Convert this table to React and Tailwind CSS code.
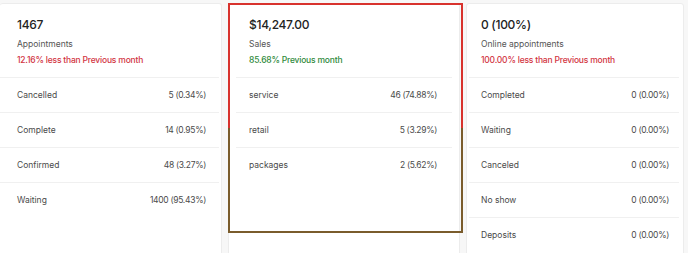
import React from "react";

const cards = [
    {
        title: "1467",
        label: "Appointments",
        note: "12.16% less than Previous month",
        noteClass: "text-[#d2343f]",
        width: "w-[222px] border-l-0",
        pad: "pl-[17px] pr-[15px]",
        rowPad: "ml-0 mr-[2px] pl-[17px] pr-[13px]",
        rows: [
            ["Cancelled", "5 (0.34%)"],
            ["Complete", "14 (0.95%)"],
            ["Confirmed", "48 (3.27%)"],
            ["Waiting", "1400 (95.43%)"],
        ],
    },
    {
        title: "$14,247.00",
        label: "Sales",
        note: "85.68% Previous month",
        noteClass: "text-[#2f8a3c]",
        width: "w-[232px]",
        pad: "pl-[20px] pr-[22px]",
        rowPad: "mx-[7px] pl-[13px] pr-[15px]",
        rows: [
            ["service", "46 (74.88%)"],
            ["retail", "5 (3.29%)"],
            ["packages", "2 (5.62%)"],
        ],
    },
    {
        title: "0 (100%)",
        label: "Online appointments",
        note: "100.00% less than Previous month",
        noteClass: "text-[#d2343f]",
        width: "w-[218px]",
        pad: "pl-[14px] pr-[14px]",
        rowPad: "ml-[2px] mr-[4px] pl-[12px] pr-[10px]",
        rows: [
            ["Completed", "0 (0.00%)"],
            ["Waiting", "0 (0.00%)"],
            ["Canceled", "0 (0.00%)"],
            ["No show", "0 (0.00%)"],
            ["Deposits", "0 (0.00%)"],
        ],
    },
];

function Card({ card }) {
    return (
        <div className={`${card.width} h-[280px] shrink-0 bg-white border border-[#ececec] rounded-[3px]`}>
            <div className={`${card.pad} pt-[13px] pb-[10px]`}>
                <div className="text-[12px] leading-[16px] font-medium tracking-[-0.3px] text-[#222]">{card.title}</div>
                <div className="mt-[4px] text-[8.5px] leading-[14px] text-[#555]">{card.label}</div>
                <div className={`mt-[2px] text-[8.5px] leading-[14px] font-medium tracking-[-0.2px] ${card.noteClass}`}>
                    {card.note}
                </div>
            </div>
            {card.rows.map(([name, value]) => (
                <div
                    key={name}
                    className={`${card.rowPad} h-[35px] flex items-center justify-between border-t border-[#f0f0f0] text-[8.5px] text-[#4a4a4a]`}
                >
                    <span>{name}</span>
                    <span className="tracking-[-0.3px]">{value}</span>
                </div>
            ))}
        </div>
    );
}

export default function App() {
    return (
        <div
            className="relative w-[688px] h-[253px] overflow-hidden bg-[#f7f7f7] flex gap-[6px] pt-[3px]"
            style={{ fontFamily: "Inter, 'Noto Sans', sans-serif" }}
        >
            {cards.map((c) => (
                <Card key={c.title} card={c} />
            ))}

            {/* highlight box drawn over the sales card */}
            <div className="absolute left-[228px] top-[3px] w-[235px] h-[125px] border-t-2 border-x-2 border-[#d8322d]" />
            <div className="absolute left-[228px] top-[128px] w-[235px] h-[105px] border-b-2 border-x-2 border-[#7a5c2c]" />
        </div>
    );
}
